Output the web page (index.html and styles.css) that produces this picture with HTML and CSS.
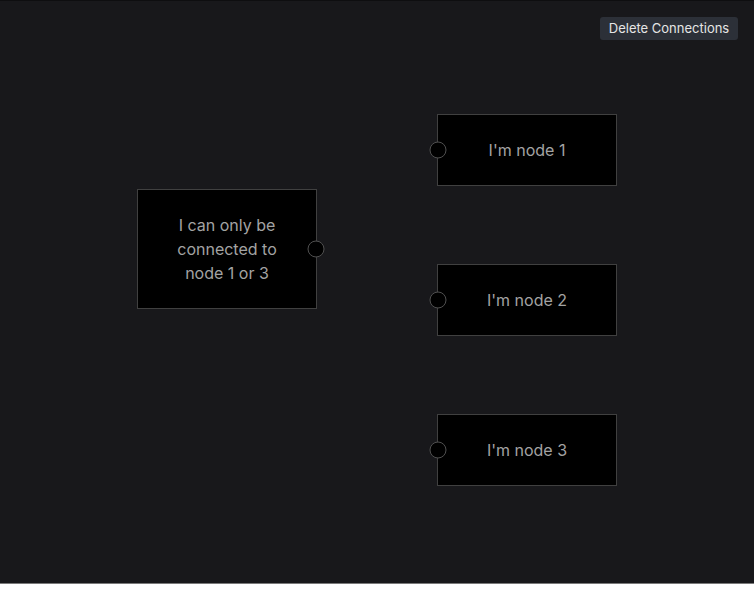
FILE: index.html
```html
<!DOCTYPE html>
<html>
<head>
<meta charset="utf-8">
<link rel="stylesheet" href="styles.css">
</head>
<body>
<div class="flow">
  <div class="toolbar">
    <button class="btn">Delete Connections</button>
  </div>
  <div class="node node-source" style="left:137px;top:188px;">
    <span>I can only be connected to node 1 or 3</span>
    <span class="handle handle-right"></span>
  </div>
  <div class="node" style="left:437px;top:113px;">
    <span class="handle handle-left"></span>
    <span>I'm node 1</span>
  </div>
  <div class="node" style="left:437px;top:263px;">
    <span class="handle handle-left"></span>
    <span>I'm node 2</span>
  </div>
  <div class="node" style="left:437px;top:413px;">
    <span class="handle handle-left"></span>
    <span>I'm node 3</span>
  </div>
</div>
</body>
</html>
```

FILE: styles.css
```css
html, body {
  margin: 0;
  padding: 0;
  background: #ffffff;
}

body {
  font-family: Inter, "Liberation Sans", sans-serif;
}

.flow {
  position: relative;
  height: 582px;
  background: #18181b;
  border-top: 1px solid #0e0e10;
  border-bottom: 1px solid #7a7a7a;
  overflow: hidden;
}

.toolbar {
  display: flex;
  justify-content: flex-end;
  padding: 16px 16px 0 0;
}

.btn {
  font-family: Inter, "Liberation Sans", sans-serif;
  font-size: 13px;
  line-height: 17px;
  color: #e5e5e5;
  background: #2c3038;
  border: none;
  border-radius: 3px;
  padding: 3px 8px;
  width: 138px;
  height: 23px;
}

.node {
  position: absolute;
  box-sizing: border-box;
  width: 180px;
  height: 72px;
  background: #000000;
  border: 1px solid #404040;
  color: #a3a3a3;
  font-size: 16px;
  line-height: 24px;
  display: flex;
  align-items: center;
  justify-content: center;
  text-align: center;
}

.node-source {
  height: 120px;
  padding: 0 30px;
}

.handle {
  position: absolute;
  top: 50%;
  width: 17px;
  height: 17px;
  box-sizing: border-box;
  border-radius: 50%;
  background: #000000;
  border: 1px solid #505050;
  transform: translate(-50%, -50%);
}

.handle-left {
  left: 0;
}

.handle-right {
  left: 100%;
}
```
